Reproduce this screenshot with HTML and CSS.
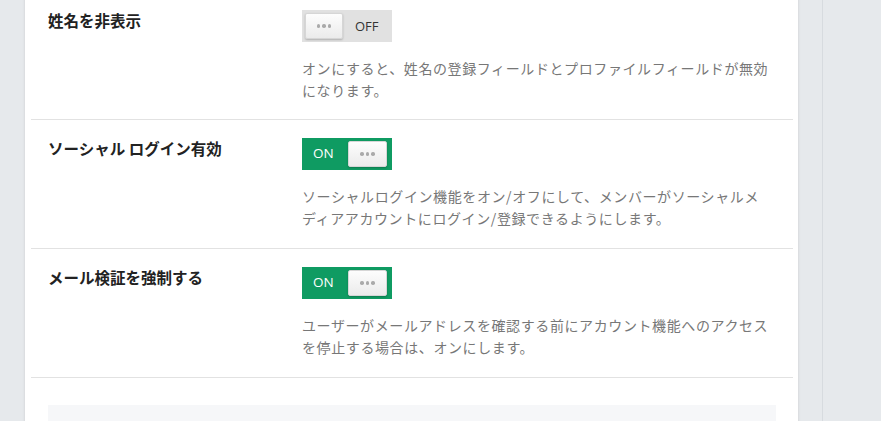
FILE: index.html
```html
<!DOCTYPE html>
<html lang="ja">
<head>
<meta charset="utf-8">
<link rel="stylesheet" href="styles.css">
</head>
<body>
<div class="page">
  <div class="gutter"></div>
  <main class="card">
    <section class="row first">
      <div class="label">姓名を非表示</div>
      <div class="content">
        <div class="toggle off">
          <span class="knob"><i></i><i></i><i></i></span>
          <span class="state">OFF</span>
        </div>
        <p class="desc">オンにすると、姓名の登録フィールドとプロファイルフィールドが無効になります。</p>
      </div>
    </section>
    <section class="row">
      <div class="label">ソーシャル ログイン有効</div>
      <div class="content">
        <div class="toggle on">
          <span class="state">ON</span>
          <span class="knob"><i></i><i></i><i></i></span>
        </div>
        <p class="desc">ソーシャルログイン機能をオン/オフにして、メンバーがソーシャルメディアアカウントにログイン/登録できるようにします。</p>
      </div>
    </section>
    <section class="row">
      <div class="label">メール検証を強制する</div>
      <div class="content">
        <div class="toggle on">
          <span class="state">ON</span>
          <span class="knob"><i></i><i></i><i></i></span>
        </div>
        <p class="desc">ユーザーがメールアドレスを確認する前にアカウント機能へのアクセスを停止する場合は、オンにします。</p>
      </div>
    </section>
    <div class="footer-box"></div>
  </main>
  <div class="side"></div>
</div>
</body>
</html>
```
FILE: styles.css
```css
html, body {
  margin: 0;
  padding: 0;
  height: 100%;
  overflow: hidden;
}
body {
  background: #e6e9ec;
  font-family: "Noto Sans CJK JP", "Noto Sans", sans-serif;
}
.page {
  display: flex;
  align-items: flex-start;
  height: 100%;
}
.gutter {
  width: 25px;
  flex: none;
}
.card {
  width: 773px;
  flex: none;
  background: #fff;
  padding: 0 5px 0 6px;
  box-sizing: border-box;
  min-height: 100%;
  box-shadow: -1px 0 2px rgba(0,0,0,0.06), 1px 0 2px rgba(0,0,0,0.06);
  margin-top: -8px;
}
.side {
  flex: 1;
  align-self: stretch;
  margin-left: 24px;
  border-left: 1px solid #d7dbdf;
}
.row {
  display: flex;
  padding: 18px 0 19px 17px;
  border-bottom: 1px solid #e2e2e2;
}
.row.first {
  padding-bottom: 18px;
}
.label {
  width: 254px;
  flex: none;
  font-weight: 700;
  font-size: 15.5px;
  line-height: 20px;
  color: #222;
}
.content {
  width: 470px;
}
.toggle {
  width: 90px;
  height: 32px;
  box-sizing: border-box;
  display: flex;
  align-items: center;
  padding: 3px;
}
.toggle.off {
  background: #e1e1e1;
}
.toggle.on {
  background: #0f9b62;
  justify-content: space-between;
}
.knob {
  width: 38px;
  height: 26px;
  box-sizing: border-box;
  border: 1px solid #d6d6d6;
  border-radius: 2px;
  background: linear-gradient(#fdfdfd, #ebebeb);
  box-shadow: 0 1px 2px rgba(0,0,0,0.22);
  display: flex;
  align-items: center;
  justify-content: center;
  gap: 2px;
}
.knob i {
  width: 3.5px;
  height: 3.5px;
  border-radius: 50%;
  background: #aaa;
}
.state {
  font-family: "Open Sans", "Noto Sans", sans-serif;
  font-size: 13px;
  line-height: 1;
}
.toggle.off .state {
  color: #333;
  margin-left: 12px;
}
.toggle.on .state {
  color: #fff;
  font-size: 13.5px;
  margin-left: 8px;
}
.toggle.on .knob {
  width: 39px;
  margin-right: 2px;
}
.desc {
  margin: 15px 0 0;
  font-size: 14px;
  letter-spacing: 0.6px;
  line-height: 22px;
  color: #777;
}
.footer-box {
  margin: 27px 17px 0;
  height: 100px;
  background: #f6f7f9;
}
```
